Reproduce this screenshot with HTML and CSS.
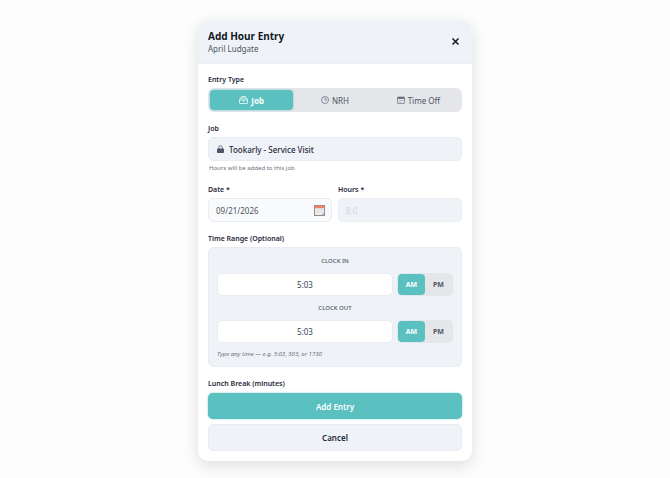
FILE: index.html
```
<!DOCTYPE html>
<html lang="en">
<head>
    <meta charset="UTF-8">
    <meta name="viewport" content="width=device-width, initial-scale=1.0">
    <title>Add Hour Entry</title>
    <link rel="stylesheet" href="styles.css">
</head>
<body>
    <div class="modal" role="dialog" aria-labelledby="modal-title">
        <header class="modal-header">
            <div>
                <h1 id="modal-title">Add Hour Entry</h1>
                <p>April Ludgate</p>
            </div>
            <button type="button" class="close" aria-label="Close">
                <svg width="9" height="9" viewBox="0 0 9 9"><path d="M1.500 1.500l6 6M7.500 1.500l-6 6" stroke="#111827" stroke-width="1.500" fill="none"/></svg>
            </button>
        </header>

        <form class="modal-body">
            <div class="field">
                <span class="label" id="type-label">Entry Type</span>
                <div class="segments" role="group" aria-labelledby="type-label">
                    <button type="button" class="active">
                        <svg width="9" height="8" viewBox="0 0 18 16" fill="none" stroke="#fff" stroke-width="1.5"><path d="M5 4V2q0-1 1-1h6q1 0 1 1v2"/><path d="M3 4h12l2 4v6q0 1-1 1H2q-1 0-1-1V8z"/><path d="M1 8h16M7 10h4"/></svg>
                        Job
                    </button>
                    <button type="button">
                        <svg width="8" height="8" viewBox="0 0 16 16" fill="none" stroke="#6b7280" stroke-width="1.6"><circle cx="8" cy="8" r="7"/><path d="M8 3.500V8h4"/></svg>
                        NRH
                    </button>
                    <button type="button">
                        <svg width="8" height="8" viewBox="0 0 16 16" fill="none" stroke="#6b7280" stroke-width="1.4"><rect x="1" y="2" width="14" height="13" rx="1"/><path d="M1 4h14" stroke-width="4"/><path d="M4 9h9M4 12h5" stroke="#a3a8b0"/></svg>
                        Time Off
                    </button>
                </div>
            </div>

            <div class="field">
                <label class="label" for="job">Job</label>
                <div class="icon-input">
                    <svg class="lock" width="7" height="9" viewBox="0 0 14 18"><path d="M3.500 8V5a3.500 3.500 0 0 1 7 0v3" fill="none" stroke="#6b7280" stroke-width="2"/><rect x="0" y="7" width="14" height="9" rx="1.500" fill="#4b5563"/></svg>
                    <input type="text" id="job" class="job" value="Tookarly - Service Visit" readonly>
                </div>
                <p class="hint">Hours will be added to this job</p>
            </div>

            <div class="row">
                <div class="field">
                    <label class="label" for="date">Date *</label>
                    <div class="icon-input">
                        <input type="text" id="date" class="date" value="09/21/2026">
                        <button type="button" class="picker" aria-label="Open calendar">
                            <svg width="11" height="11" viewBox="0 0 22 22"><rect x="1" y="1" width="20" height="20" fill="#eceef1" stroke="#8b8f96" stroke-width="2"/><path d="M1 4h20" stroke="#ef7f68" stroke-width="5"/><path d="M5 10h13M10 14h8" stroke="#dcdfe3" stroke-width="2"/><path d="M5 12h4v5H5z" fill="#f3d9b4"/><path d="M14 20l6-5v5z" fill="#b6bac1"/></svg>
                        </button>
                    </div>
                </div>
                <div class="field">
                    <label class="label" for="hours">Hours *</label>
                    <input type="text" id="hours" class="hours" placeholder="8.0">
                </div>
            </div>

            <div class="field">
                <span class="label">Time Range (Optional)</span>
                <div class="time-range">
                    <label class="clock-label" for="clock-in">CLOCK IN</label>
                    <div class="clock">
                        <input type="text" id="clock-in" value="5:03">
                        <div class="ampm">
                            <button type="button" class="active">AM</button>
                            <button type="button">PM</button>
                        </div>
                    </div>
                    <label class="clock-label" for="clock-out">CLOCK OUT</label>
                    <div class="clock">
                        <input type="text" id="clock-out" value="5:03">
                        <div class="ampm">
                            <button type="button" class="active">AM</button>
                            <button type="button">PM</button>
                        </div>
                    </div>
                    <p class="time-hint">Type any time — e.g. 5:03, 503, or 1730</p>
                </div>
            </div>

            <span class="label">Lunch Break (minutes)</span>
            <div class="actions">
                <button type="submit" class="submit">Add Entry</button>
                <button type="button" class="cancel">Cancel</button>
            </div>
        </form>
    </div>
</body>
</html>
```
FILE: styles.css
```
* {
    box-sizing: border-box;
}

body {
    margin: 0;
    padding: 20px;
    background-color: #fdfdfd;
    font-family: "Noto Sans", "Open Sans", sans-serif;
    font-size: 8px;
    color: #1f2937;
}

h1, p {
    margin: 0;
}

button, input {
    font: inherit;
    color: inherit;
    margin: 0;
}

button {
    border: none;
    padding: 0;
    background: none;
    cursor: pointer;
}

svg {
    display: block;
    flex: none;
}

.modal {
    max-width: 274px;
    margin: 0 auto;
    background-color: #fff;
    border-radius: 10px;
    box-shadow: 0 5px 16px rgba(0, 0, 0, 0.12);
    overflow: hidden;
}

.modal-header {
    display: flex;
    justify-content: space-between;
    align-items: center;
    padding: 9px 10px;
    background-color: #eff3f8;
    border-bottom: 1px solid #ebeef3;
}

.modal-header h1 {
    font-size: 10px;
    line-height: 14px;
    font-weight: 700;
    color: #111827;
}

.modal-header p {
    line-height: 11px;
    color: #4b5563;
}

.close {
    padding: 2px;
}

.modal-body {
    padding: 11px 10px 10px;
}

.field {
    margin-bottom: 12px;
}

.label {
    display: block;
    margin-bottom: 3px;
    font-size: 7px;
    line-height: 10px;
    font-weight: 600;
}

input {
    display: block;
    width: 100%;
    height: 24px;
    padding: 0 7px;
    border: 1px solid #e8ebf0;
    border-radius: 5px;
    background-color: #eff3f8;
}

.segments {
    display: grid;
    grid-template-columns: repeat(3, 1fr);
    padding: 2px;
    border-radius: 6px;
    background-color: #e4e6ea;
}

.segments button {
    display: flex;
    justify-content: center;
    align-items: center;
    gap: 3px;
    height: 20px;
    border-radius: 4px;
    color: #4b5563;
}

.segments .active {
    font-weight: 700;
    color: #fff;
    background-color: #5ac1c0;
    box-shadow: 0 0 2px rgba(90, 193, 192, 0.8);
}

.icon-input {
    position: relative;
}

.lock {
    position: absolute;
    top: 8px;
    left: 9px;
}

.job {
    padding-left: 20px;
    font-weight: 500;
}

.hint {
    margin-top: 3px;
    padding-left: 1px;
    font-size: 6px;
    line-height: 9px;
    color: #6b7280;
}

.row {
    display: grid;
    grid-template-columns: 1fr 1fr;
    gap: 6px;
}

.date {
    background-color: #f9fafb;
    color: #4b5563;
}

.picker {
    position: absolute;
    top: 7px;
    right: 7px;
}

.hours::placeholder {
    color: #cfd4da;
}

.time-range {
    padding: 8px 8px 7px;
    border: 1px solid #e8ebf0;
    border-radius: 6px;
    background-color: #eff3f8;
}

.clock-label {
    display: block;
    margin-bottom: 7px;
    font-size: 6px;
    line-height: 10px;
    font-weight: 500;
    text-align: center;
    color: #4b5563;
}

.clock {
    display: flex;
    gap: 4px;
    margin-bottom: 7px;
}

.clock input {
    flex: 1;
    min-width: 0;
    height: 23px;
    text-align: center;
    color: #374151;
    background-color: #fff;
}

.ampm {
    display: flex;
    padding: 1px;
    border-radius: 5px;
    background-color: #e4e6ea;
}

.ampm button {
    width: 27px;
    border-radius: 4px;
    font-size: 7px;
    font-weight: 700;
    color: #4b5563;
}

.ampm .active {
    color: #fff;
    background-color: #5ac1c0;
}

.time-hint {
    font-size: 6px;
    line-height: 9px;
    font-style: italic;
    color: #6b7280;
}

.actions {
    display: grid;
    gap: 5px;
    padding-top: 1px;
}

.actions button {
    height: 26px;
    border-radius: 5px;
    font-weight: 600;
}

.submit {
    color: #fff;
    background-color: #5ac1c0;
    box-shadow: 0 0 2px rgba(90, 193, 192, 0.8);
}

.actions .cancel {
    height: 27px;
    border: 1px solid #e8ebf0;
    background-color: #eff3f8;
}
```
